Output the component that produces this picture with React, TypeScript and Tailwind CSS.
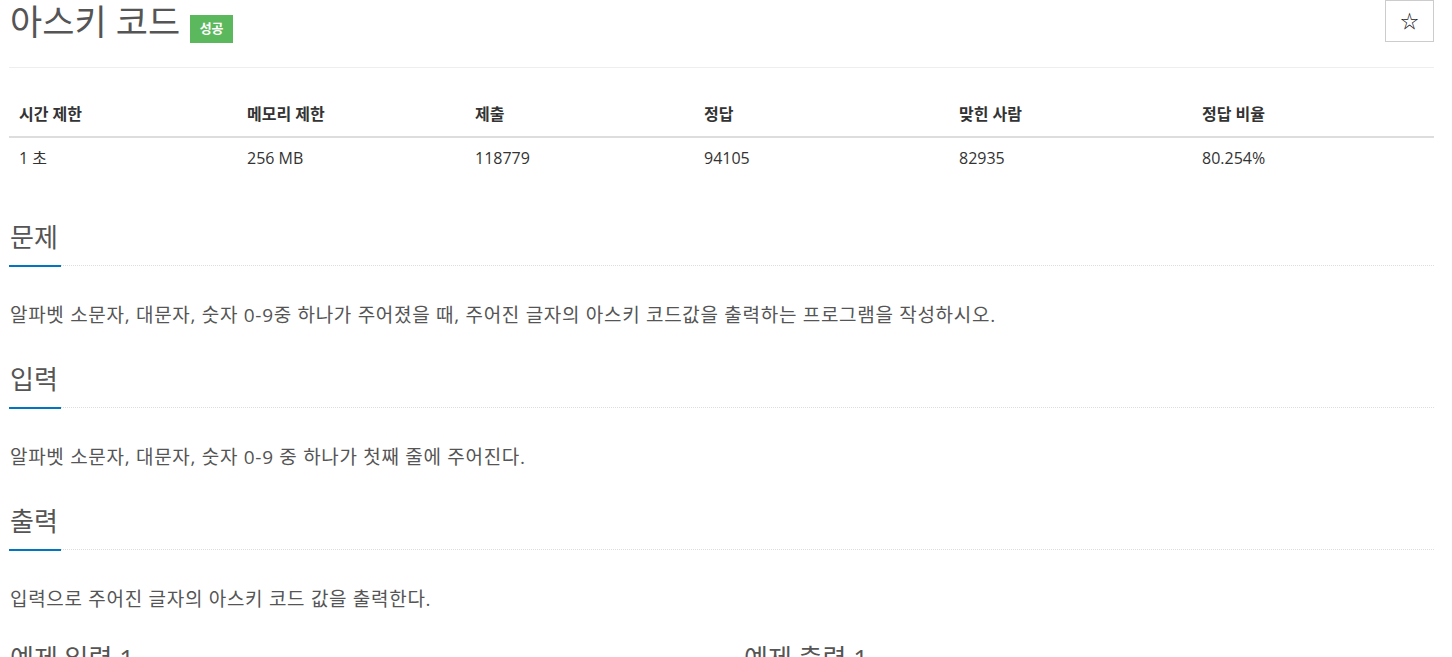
import React from 'react';

const font = { fontFamily: '"Open Sans", "Noto Sans CJK KR", sans-serif' };

const stats = [
  { label: '시간 제한', value: '1 초' },
  { label: '메모리 제한', value: '256 MB' },
  { label: '제출', value: '118779' },
  { label: '정답', value: '94105' },
  { label: '맞힌 사람', value: '82935' },
  { label: '정답 비율', value: '80.254%' },
];

function Headline({ title }: { title: string }) {
  return (
    <div className="flex border-b border-dotted border-[#dddddd]">
      <span className="-mb-[2px] border-b-2 border-[#0076c0] pl-[1px] pr-[3px] pb-[12px] text-[26px] leading-[32px] text-[#555]">
        {title}
      </span>
    </div>
  );
}

function Section({ title, children }: { title: string; children: React.ReactNode }) {
  return (
    <section className="mt-[35px]">
      <Headline title={title} />
      <p className="mt-[36px] pl-[1px] text-[19px] leading-[26px] tracking-[0.7px] text-[#555]">{children}</p>
    </section>
  );
}

export default function App() {
  return (
    <div className="min-h-[657px] overflow-hidden bg-white" style={font}>
      <div className="ml-[9px] w-[1425px]">
        {/* Title */}
        <div className="flex items-start justify-between border-b border-[#eeeeee] pb-[23px]">
          <div className="flex items-start">
            <h1 className="pl-[1px] text-[35px] leading-[44px] font-normal text-[#555]">아스키 코드</h1>
            <span className="ml-[10px] mt-[15px] flex h-[28px] w-[43px] items-center justify-center bg-[#5cb85c] text-[13px] font-bold text-white">
              성공
            </span>
          </div>
          <button className="flex h-[42px] w-[49px] items-center justify-center border border-[#cccccc] bg-white text-[18px] text-[#111]">
            ☆
          </button>
        </div>

        {/* Stats table */}
        <div className="mt-[28px] grid grid-cols-[228px_228px_229px_255px_243px_1fr]">
          {stats.map((s) => (
            <div
              key={s.label}
              className="border-b-2 border-[#dddddd] pl-[10px] pt-[8px] pb-[12px] text-[16px] leading-[20px] font-bold text-[#333]"
            >
              {s.label}
            </div>
          ))}
          {stats.map((s) => (
            <div key={s.value} className="pl-[10px] pt-[10px] pb-[8px] text-[16px] leading-[20px] text-[#333]">
              {s.value}
            </div>
          ))}
        </div>

        <div className="pt-[10px]">
          <Section title="문제">
            알파벳 소문자, 대문자, 숫자 0-9중 하나가 주어졌을 때, 주어진 글자의 아스키 코드값을 출력하는 프로그램을 작성하시오.
          </Section>
          <Section title="입력">알파벳 소문자, 대문자, 숫자 0-9 중 하나가 첫째 줄에 주어진다.</Section>
          <Section title="출력">입력으로 주어진 글자의 아스키 코드 값을 출력한다.</Section>
        </div>

        {/* Examples */}
        <div className="mt-[30px] grid grid-cols-[734px_1fr]">
          <Headline title="예제 입력 1" />
          <Headline title="예제 출력 1" />
        </div>
      </div>
    </div>
  );
}
